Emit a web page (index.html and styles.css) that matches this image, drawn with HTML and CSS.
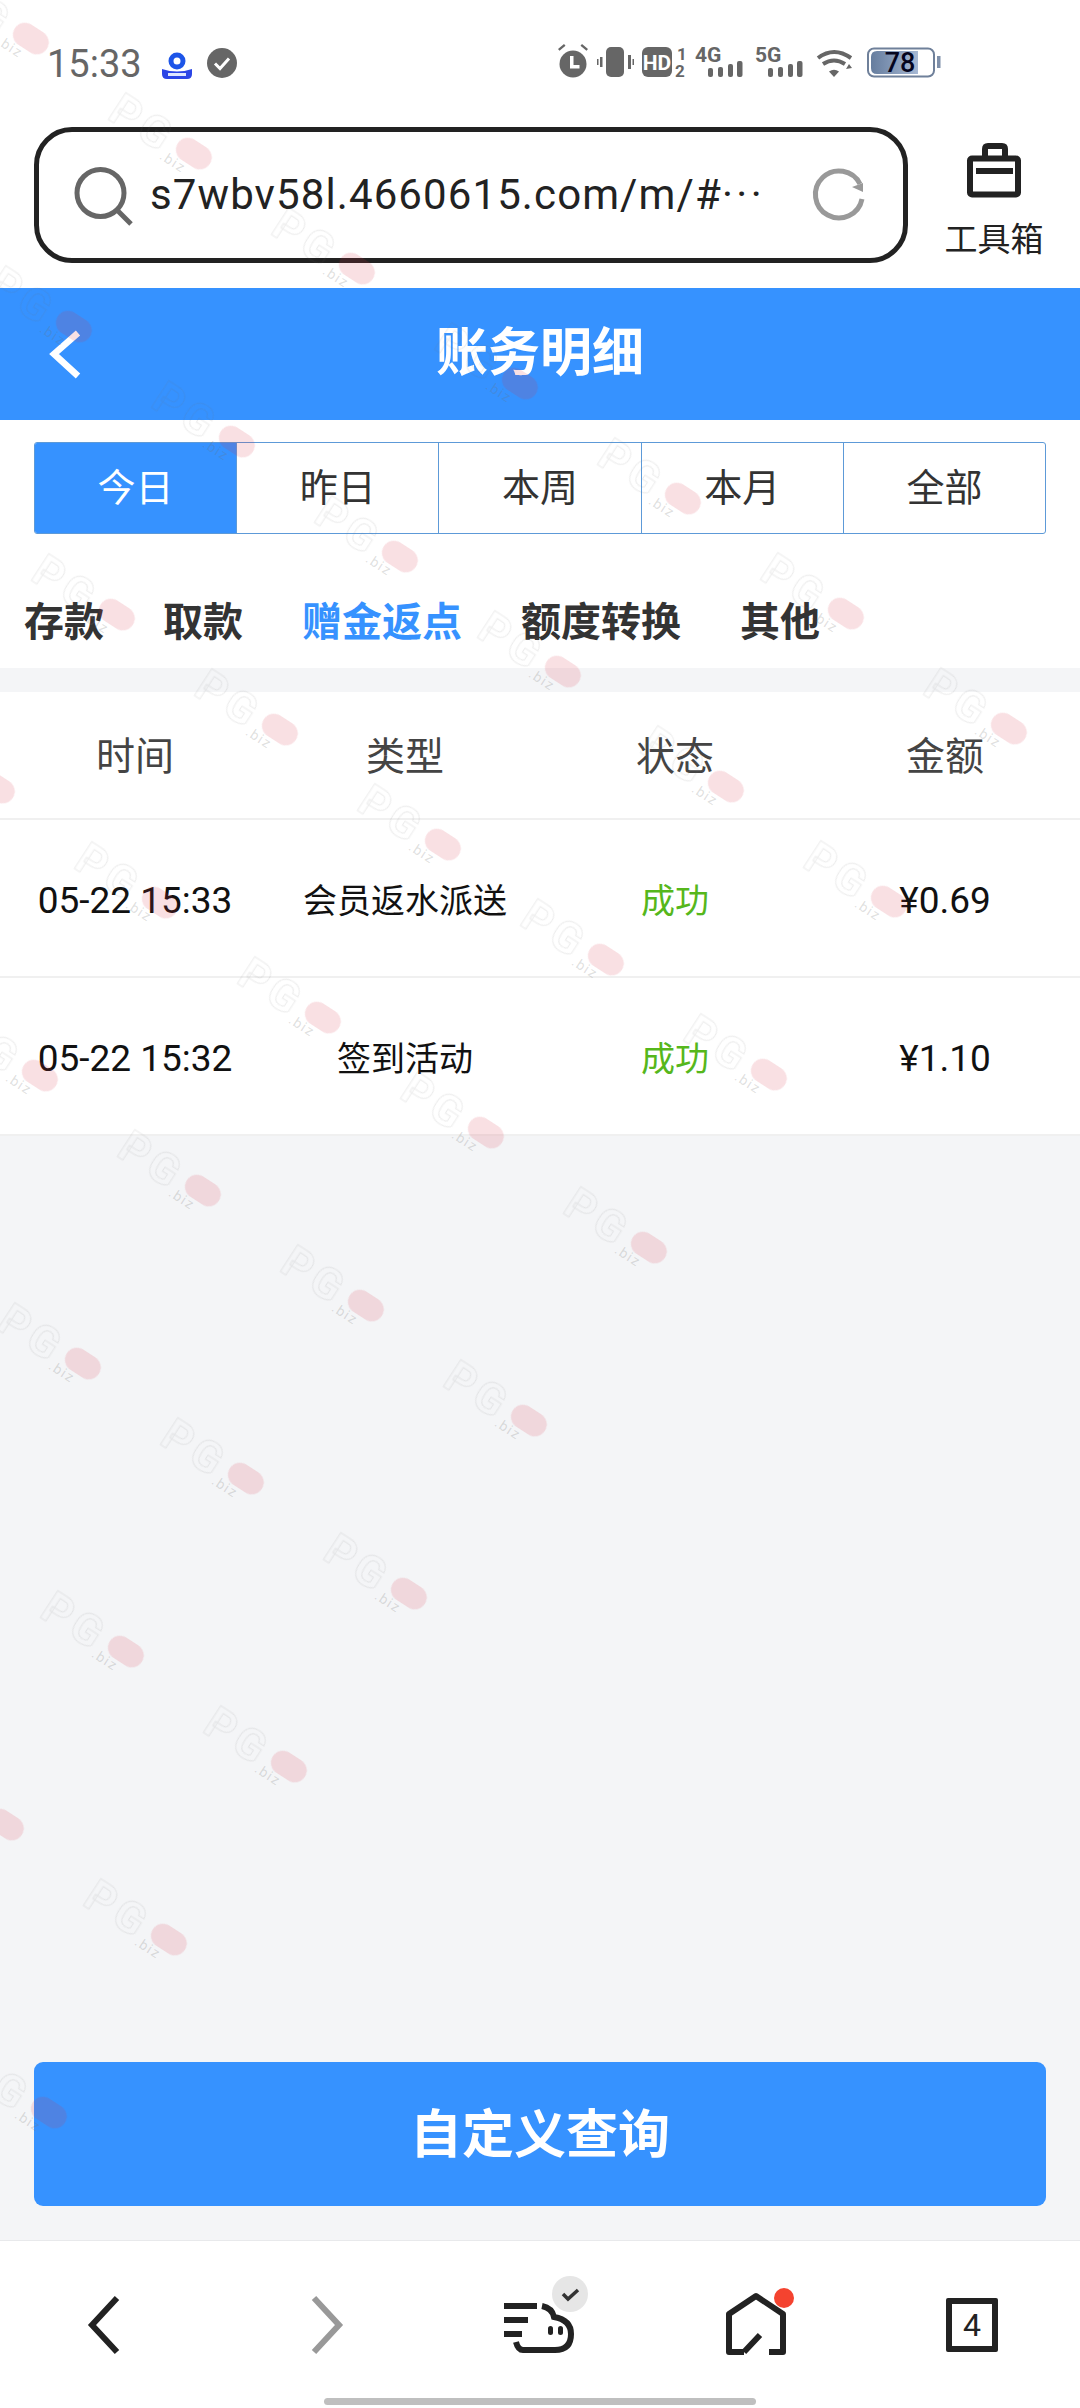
FILE: index.html
```html
<!DOCTYPE html>
<html lang="zh">
<head>
<meta charset="utf-8">
<title>账务明细</title>
<link rel="stylesheet" href="styles.css">
</head>
<body>
<div class="page">
  <div class="status">
    <span class="time">15:33</span>
    <svg class="st-app" viewBox="162 48 30 30"><circle cx="177" cy="60" r="6" fill="none" stroke="#1d55e8" stroke-width="5"/><path d="M162 68q15 5 30 0v5q0 5-5 5h-20q-5 0-5-5z" fill="#2b45e6"/><rect x="168" y="72" width="18" height="3" fill="#dfe6ff"/></svg>
    <svg class="st-check" viewBox="0 0 30 30"><circle cx="15" cy="15" r="15" fill="#666"/><path d="M8 15.5l5 5 9-10" fill="none" stroke="#fff" stroke-width="3"/></svg>
    <svg class="st-right" viewBox="556 40 389 50">
      <g fill="#666">
        <circle cx="573" cy="65" r="13.5"/>
        <path d="M558 50l6-5 1.500 1.800-6 5zM588 50l-6-5-1.500 1.800 6 5z"/>
        <path d="M570 57h3.500v9h6v3.500H570z" fill="#fff"/>
        <rect x="606" y="48" width="18" height="30" rx="5"/>
        <rect x="600" y="58" width="2.500" height="10"/><rect x="628" y="56" width="3" height="14"/>
        <rect x="597" y="60" width="1.500" height="6"/><rect x="632.500" y="60" width="1.500" height="6"/>
        <rect x="642" y="48" width="30" height="30" rx="6"/>
        <text x="657" y="71" class="st-hd">HD</text>
        <text x="677" y="61" class="st-small">1</text>
        <text x="675" y="78" class="st-small">2</text>
        <text x="695" y="63" class="st-net">4G</text>
        <rect x="708" y="69" width="5" height="9" rx="2"/><rect x="718" y="68" width="5" height="10" rx="2"/><rect x="728" y="65" width="5" height="13" rx="2"/><rect x="737" y="62" width="5.500" height="16" rx="2"/>
        <text x="755" y="63" class="st-net">5G</text>
        <rect x="768" y="69" width="5" height="9" rx="2"/><rect x="778" y="68" width="5" height="10" rx="2"/><rect x="788" y="65" width="5" height="13" rx="2"/><rect x="797" y="62" width="5.500" height="16" rx="2"/>
        <path d="M834 78l-5-5.500q5-3.500 10 0z"/>
        <path d="M846 70l6-1-3-4z"/>
      </g>
      <g fill="none" stroke="#666" stroke-width="4">
        <path d="M818 59q16-12 33 0"/><path d="M823 65q11-7 22 0"/>
      </g>
      <rect x="868" y="49.500" width="66" height="28" rx="6" fill="#fff" stroke="#6f809a" stroke-width="2"/>
      <path d="M871 58q0-6 6-6h41v23h-41q-6 0-6-6z" fill="url(#bat)"/>
      <defs><linearGradient id="bat"><stop offset="0" stop-color="#667d9e"/><stop offset="1" stop-color="#a6b8d4"/></linearGradient></defs>
      <rect x="937" y="57" width="3.500" height="12" fill="#7f90aa"/>
      <text x="900" y="73" class="st-bat">78</text>
    </svg>
  </div>

  <div class="toolbar">
    <div class="urlbox">
      <svg class="url-search" viewBox="70 160 64 70"><circle cx="100.500" cy="193" r="23.500" fill="none" stroke="#666" stroke-width="5"/><path d="M117 210l14 14" stroke="#666" stroke-width="5" fill="none"/></svg>
      <span class="url-text">s7wbv58l.4660615.com/m/#<span class="url-more">···</span></span>
      <svg class="url-refresh" viewBox="810 165 60 60"><path d="M861 184A23.500 23.500 0 1 0 863 199" fill="none" stroke="#999" stroke-width="5"/><path d="M853 187l11-4v9z" fill="#999"/></svg>
    </div>
    <div class="tool">
      <svg class="tool-icon" viewBox="966 142 60 58"><path d="M987 158v-9q0-3 3-3h14q3 0 3 3v9" fill="none" stroke="#222" stroke-width="6"/><rect x="972" y="158.500" width="48" height="36" rx="2" fill="none" stroke="#222" stroke-width="6"/><rect x="978" y="168" width="37" height="6" fill="#222"/></svg>
      <span class="tool-label">工具箱</span>
    </div>
  </div>

  <header class="head">
    <svg class="head-back" viewBox="40 325 50 60"><path d="M78 334l-24 21 24 22" fill="none" stroke="#fff" stroke-width="6.500"/></svg>
    <h1 class="head-title">账务明细</h1>
  </header>

  <div class="tabs">
    <div class="tab tab-on">今日</div>
    <div class="tab">昨日</div>
    <div class="tab">本周</div>
    <div class="tab">本月</div>
    <div class="tab">全部</div>
  </div>

  <nav class="nav">
    <span class="nav-item">存款</span>
    <span class="nav-item">取款</span>
    <span class="nav-item nav-on">赠金返点</span>
    <span class="nav-item">额度转换</span>
    <span class="nav-item">其他</span>
  </nav>

  <main class="main">
    <div class="table">
      <div class="row row-head"><span>时间</span><span>类型</span><span>状态</span><span>金额</span></div>
      <div class="row"><span class="num">05-22 15:33</span><span>会员返水派送</span><span class="ok">成功</span><span class="num">¥0.69</span></div>
      <div class="row"><span class="num">05-22 15:32</span><span>签到活动</span><span class="ok">成功</span><span class="num">¥1.10</span></div>
    </div>
    <button class="query">自定义查询</button>
  </main>

  <footer class="bar">
    <svg class="bar-icon" viewBox="58 2274 100 100"><path d="M117 2297l-25 27 25 27" fill="none" stroke="#222" stroke-width="6"/></svg>
    <svg class="bar-icon" viewBox="274 2274 100 100"><path d="M314 2297l25 27-25 27" fill="none" stroke="#999" stroke-width="6"/></svg>
    <svg class="bar-icon" viewBox="490 2274 100 100">
      <circle cx="570" cy="2293" r="18" fill="#e6e6e6"/>
      <path d="M563 2293l5 5 10-9" fill="none" stroke="#333" stroke-width="3.500"/>
      <path d="M504 2305h33M504 2319h24M504 2333h18" fill="none" stroke="#222" stroke-width="6"/>
      <path d="M542 2305q10 2 12 11q17 3 17 17q0 16-16 16h-32q-5 0-7-8" fill="none" stroke="#222" stroke-width="6"/>
      <rect x="548" y="2325" width="5" height="9" rx="2.500" fill="#222"/><rect x="558" y="2325" width="5" height="9" rx="2.500" fill="#222"/>
    </svg>
    <svg class="bar-icon" viewBox="706 2274 100 100">
      <path d="M744 2351h-15v-38l27-18 27 18v38h-14M744 2351l16-17" fill="none" stroke="#222" stroke-width="6" stroke-linejoin="round"/>
      <circle cx="784" cy="2297" r="10" fill="#f4432f"/>
    </svg>
    <div class="bar-tabs"><span>4</span></div>
    <i class="home-ind"></i>
  </footer>

  <div class="wms">
    <div class="wm" style="left:30px;top:38px"><b>PG</b><i></i><em>.biz</em></div>
    <div class="wm" style="left:193px;top:153px"><b>PG</b><i></i><em>.biz</em></div>
    <div class="wm" style="left:356px;top:268px"><b>PG</b><i></i><em>.biz</em></div>
    <div class="wm" style="left:519px;top:383px"><b>PG</b><i></i><em>.biz</em></div>
    <div class="wm" style="left:682px;top:498px"><b>PG</b><i></i><em>.biz</em></div>
    <div class="wm" style="left:845px;top:613px"><b>PG</b><i></i><em>.biz</em></div>
    <div class="wm" style="left:1008px;top:728px"><b>PG</b><i></i><em>.biz</em></div>
    <div class="wm" style="left:73px;top:326px"><b>PG</b><i></i><em>.biz</em></div>
    <div class="wm" style="left:236px;top:441px"><b>PG</b><i></i><em>.biz</em></div>
    <div class="wm" style="left:399px;top:556px"><b>PG</b><i></i><em>.biz</em></div>
    <div class="wm" style="left:562px;top:671px"><b>PG</b><i></i><em>.biz</em></div>
    <div class="wm" style="left:725px;top:786px"><b>PG</b><i></i><em>.biz</em></div>
    <div class="wm" style="left:888px;top:901px"><b>PG</b><i></i><em>.biz</em></div>
    <div class="wm" style="left:116px;top:614px"><b>PG</b><i></i><em>.biz</em></div>
    <div class="wm" style="left:279px;top:729px"><b>PG</b><i></i><em>.biz</em></div>
    <div class="wm" style="left:442px;top:844px"><b>PG</b><i></i><em>.biz</em></div>
    <div class="wm" style="left:605px;top:959px"><b>PG</b><i></i><em>.biz</em></div>
    <div class="wm" style="left:768px;top:1074px"><b>PG</b><i></i><em>.biz</em></div>
    <div class="wm" style="left:-4px;top:787px"><b>PG</b><i></i><em>.biz</em></div>
    <div class="wm" style="left:159px;top:902px"><b>PG</b><i></i><em>.biz</em></div>
    <div class="wm" style="left:322px;top:1017px"><b>PG</b><i></i><em>.biz</em></div>
    <div class="wm" style="left:485px;top:1132px"><b>PG</b><i></i><em>.biz</em></div>
    <div class="wm" style="left:648px;top:1247px"><b>PG</b><i></i><em>.biz</em></div>
    <div class="wm" style="left:39px;top:1075px"><b>PG</b><i></i><em>.biz</em></div>
    <div class="wm" style="left:202px;top:1190px"><b>PG</b><i></i><em>.biz</em></div>
    <div class="wm" style="left:365px;top:1305px"><b>PG</b><i></i><em>.biz</em></div>
    <div class="wm" style="left:528px;top:1420px"><b>PG</b><i></i><em>.biz</em></div>
    <div class="wm" style="left:82px;top:1363px"><b>PG</b><i></i><em>.biz</em></div>
    <div class="wm" style="left:245px;top:1478px"><b>PG</b><i></i><em>.biz</em></div>
    <div class="wm" style="left:408px;top:1593px"><b>PG</b><i></i><em>.biz</em></div>
    <div class="wm" style="left:125px;top:1651px"><b>PG</b><i></i><em>.biz</em></div>
    <div class="wm" style="left:288px;top:1766px"><b>PG</b><i></i><em>.biz</em></div>
    <div class="wm" style="left:5px;top:1824px"><b>PG</b><i></i><em>.biz</em></div>
    <div class="wm" style="left:168px;top:1939px"><b>PG</b><i></i><em>.biz</em></div>
    <div class="wm" style="left:48px;top:2112px"><b>PG</b><i></i><em>.biz</em></div>
  </div>
</div>
</body>
</html>
```

FILE: styles.css
```css
* { box-sizing: border-box; }
html, body { margin: 0; padding: 0; }
body { font-family: Roboto, "Noto Sans CJK SC", sans-serif; background: #fff; }
.page { position: relative; width: 1080px; height: 2408px; display: flex; flex-direction: column; overflow: hidden; background: #fff; }

/* status bar */
.status { height: 127px; flex: none; display: flex; align-items: center; padding-left: 47px; }
.time { width: 115px; font-size: 38px; line-height: 1; color: #666; }
.st-app { width: 30px; height: 30px; }
.st-check { width: 30px; height: 30px; margin-left: 15px; margin-top: -1px; }
.st-right { width: 389px; height: 50px; margin-left: 319px; }
.st-hd { font: 700 21px Roboto, sans-serif; fill: #fff; text-anchor: middle; }
.st-small { font: 700 17px Roboto, sans-serif; fill: #666; }
.st-net { font: 700 21px Roboto, sans-serif; fill: #666; }
.st-bat { font: 500 27px Roboto, sans-serif; fill: #05051e; text-anchor: middle; }

/* browser toolbar */
.toolbar { height: 161px; flex: none; display: flex; align-items: flex-start; padding-left: 34px; }
.urlbox { width: 874px; height: 136px; border: 5px solid #222; border-radius: 38px; display: flex; align-items: center; padding-left: 31px; }
.url-search { width: 64px; height: 70px; flex: none; }
.url-text { margin-left: 16px; width: 611px; font-size: 42px; line-height: 1; letter-spacing: 1.1px; color: #222; white-space: nowrap; }
.url-more { letter-spacing: 3.5px; }
.url-refresh { width: 60px; height: 60px; margin-left: 48px; flex: none; }
.tool { margin-left: 37px; width: 98px; display: flex; flex-direction: column; align-items: center; padding-top: 15px; }
.tool-icon { width: 60px; height: 58px; }
.tool-label { margin-top: 21px; font-size: 33px; line-height: 38px; color: #222; white-space: nowrap; }

/* page header */
.head { height: 132px; flex: none; background: #3692ff; display: flex; align-items: center; }
.head-back { width: 50px; height: 60px; margin-left: 40px; flex: none; }
.head-title { margin: 0 0 0 -90px; width: 1080px; text-align: center; font-size: 52px; font-weight: 700; color: #fff; line-height: 1; }

/* date tabs */
.tabs { margin: 22px 34px 0; height: 92px; flex: none; display: flex; border: 1px solid #5d9ad8; border-radius: 3px; overflow: hidden; }
.tab { flex: 1; display: flex; align-items: center; justify-content: center; padding-bottom: 8px; font-size: 38px; color: #333; border-left: 1px solid #5d9ad8; }
.tab:first-child { border-left: 0; }
.tab-on { background: #3692ff; color: #fff; }

/* type nav */
.nav { height: 134px; flex: none; display: flex; align-items: flex-end; gap: 59px; padding: 0 0 25px 24px; }
.nav-item { font-size: 40px; line-height: 1; font-weight: 700; color: #333; white-space: nowrap; }
.nav-on { color: #3692ff; }

/* records */
.main { flex: 1; min-height: 0; background: #f4f5f7; padding-top: 24px; display: flex; flex-direction: column; }
.table { background: #fff; }
.row { height: 158px; display: grid; grid-template-columns: repeat(4, 1fr); align-items: center; text-align: center; font-size: 34px; color: #111; border-bottom: 2px solid #f0f0f0; }
.row-head { height: 128px; font-size: 39px; color: #444; padding-bottom: 5px; }
.num { font-size: 37px; padding-top: 4px; }
.ok { color: #56b71c; }
.query { margin: auto 34px 34px; height: 144px; flex: none; border: 0; border-radius: 9px; padding: 0 0 8px; background: #3692ff; color: #fff; font-family: inherit; font-size: 52px; font-weight: 700; }

/* bottom browser bar */
.bar { height: 168px; flex: none; position: relative; background: #fff; border-top: 1px solid #e8e9eb; display: grid; grid-template-columns: repeat(5, 216px); align-items: center; justify-items: center; }
.bar-icon { width: 100px; height: 100px; }
.bar-tabs { width: 52px; height: 54px; border: 6px solid #222; border-radius: 2px; display: flex; align-items: center; justify-content: center; font-size: 32px; font-weight: 400; color: #222; line-height: 1; }
.home-ind { position: absolute; left: 324px; bottom: 3px; width: 432px; height: 7px; border-radius: 4px; background: #bfbfbf; }

/* repeating watermark: left/top give the centre of the pill */
.wms { position: absolute; inset: 0; overflow: hidden; pointer-events: none; }
.wm { position: absolute; width: 112px; height: 46px; margin: -20px 0 0 -92px; transform-origin: 92px 20px; transform: rotate(33deg); display: flex; align-items: center; }
.wm b { width: 74px; font-family: Roboto, sans-serif; font-size: 44px; line-height: 46px; font-weight: 700; letter-spacing: 5px; color: transparent; -webkit-text-stroke: 1px rgba(110, 110, 110, .13); white-space: nowrap; filter: blur(.3px); }
.wm i { width: 38px; height: 24px; margin-top: -6px; border-radius: 12px; background: rgba(214, 50, 70, .15); filter: blur(.7px); }
.wm em { position: absolute; left: 66px; top: 30px; font-family: Roboto, sans-serif; font-size: 14px; line-height: 16px; font-style: normal; letter-spacing: 1.5px; color: rgba(110, 110, 110, .22); }
```
